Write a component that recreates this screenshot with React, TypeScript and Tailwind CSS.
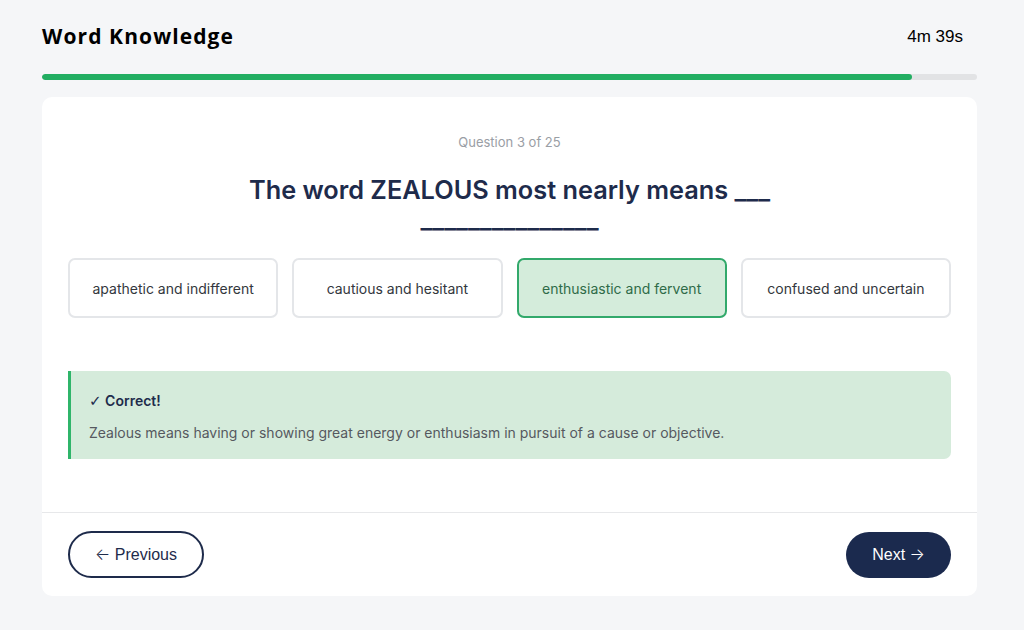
import React from 'react';

const options = [
  { id: 'a', text: 'apathetic and indifferent' },
  { id: 'b', text: 'cautious and hesitant' },
  { id: 'c', text: 'enthusiastic and fervent' },
  { id: 'd', text: 'confused and uncertain' },
];

export default function App() {
  const selected = 'c';
  const progress = 93;

  return (
    <div className="min-h-screen w-[1024px] bg-[#f5f6f8] font-['Inter',sans-serif]">
      <div className="ml-[42px] w-[935px] pt-[23px]">
        {/* Header */}
        <div className="flex items-center justify-between h-[28px]">
          <h1 className="font-['Open_Sans',sans-serif] text-[21px] font-bold text-black tracking-[1.1px]">
            Word Knowledge
          </h1>
          <div className="px-[14px] font-['Liberation_Sans',sans-serif] text-[17px] text-black">
            4m 39s
          </div>
        </div>

        {/* Progress */}
        <div className="mt-[23px] h-[6px] w-full rounded-full bg-[#e2e3e5] overflow-hidden">
          <div className="h-full rounded-full bg-[#22ae62]" style={{ width: `${progress}%` }} />
        </div>

        {/* Card */}
        <div className="mt-[17px] rounded-[10px] bg-white">
          <div className="px-[26px] pt-[35px] pb-[53px]">
            <p className="text-center text-[13px] leading-[20px] text-[#9a9ea5]">Question 3 of 25</p>
            <h2 className="mx-auto mt-[23px] max-w-[620px] text-center text-[25.3px] leading-[29px] font-semibold text-[#1e2b4b]">
              The word ZEALOUS most nearly means ___ _______________
            </h2>

            <div className="mt-[25px] grid grid-cols-4 gap-[14px]">
              {options.map((o) => (
                <button
                  key={o.id}
                  className={
                    o.id === selected
                      ? 'h-[60px] rounded-[7px] border-2 border-[#32a96b] bg-[#d4ecdb] text-[14px] text-[#2f6b48]'
                      : 'h-[60px] rounded-[7px] border-2 border-[#e4e6e9] bg-white text-[14px] text-[#33373d]'
                  }
                >
                  {o.text}
                </button>
              ))}
            </div>

            <div className="mt-[53px] rounded-r-[7px] border-l-[3px] border-[#2fb56a] bg-[#d5ebdb] px-[18px] pt-[20px] pb-[16px]">
              <p className="text-[14px] leading-[20px] font-semibold text-[#1e2b4b]">
                <span className="font-['DejaVu_Sans',sans-serif] font-bold text-[15px]">✓</span> Correct!
              </p>
              <p className="mt-[12px] text-[14px] leading-[20px] text-[#55595f]">
                Zealous means having or showing great energy or enthusiasm in pursuit of a cause or objective.
              </p>
            </div>
          </div>

          {/* Footer */}
          <div className="flex items-center justify-between border-t border-[#e7e8ea] px-[26px] pt-[18px] pb-[18px]">
            <button className="h-[47px] w-[136px] rounded-full border-2 border-[#1e2b4b] bg-white font-['Liberation_Sans',sans-serif] text-[16px] text-[#1e2b4b]">
              <span className="font-['Inter',sans-serif] font-light">←</span> Previous
            </button>
            <button className="h-[46px] w-[105px] rounded-full bg-[#1b2a4e] font-['Liberation_Sans',sans-serif] text-[16px] text-white">
              Next <span className="font-['Inter',sans-serif] font-light">→</span>
            </button>
          </div>
        </div>
      </div>
    </div>
  );
}
